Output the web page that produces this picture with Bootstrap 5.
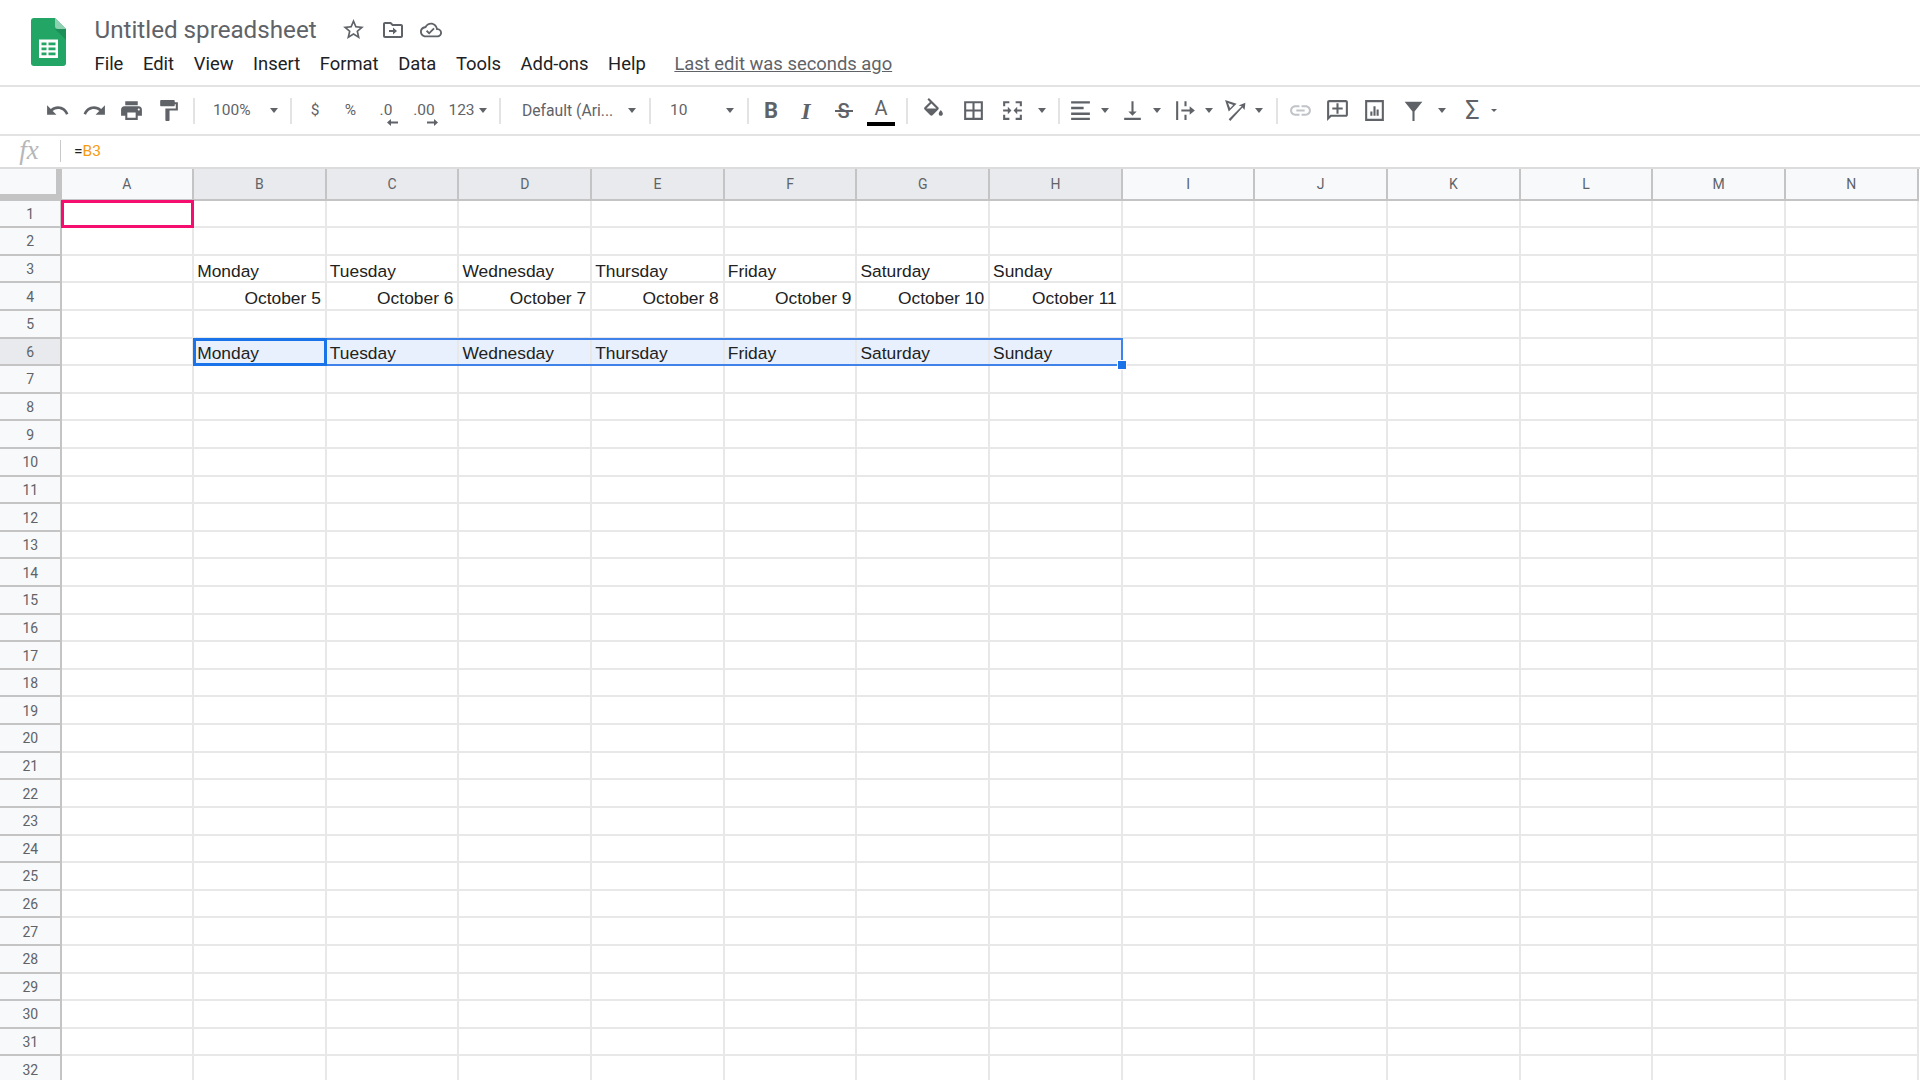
<!DOCTYPE html>
<html lang="en">
<head>
  <meta charset="UTF-8">
  <meta name="viewport" content="width=device-width, initial-scale=1.0">
  <title>Untitled spreadsheet</title>
  <link rel="stylesheet" href="https://cdn.jsdelivr.net/npm/bootstrap@5.3.0/dist/css/bootstrap.min.css" />
  <style>
    html, body { height: 100%; overflow: hidden; }
    body { background: #fff; font-family: Roboto, sans-serif; color: #202124; }

    /* top bar */
    .app-header { height: 85px; }
    .app-logo { width: 35px; height: 48px; margin: 18px 0 0 30.5px; flex: none; }
    .app-titles { margin-left: 29px; }
    .doc-title { height: 28px; margin-top: 15.5px; gap: 15px; }
    .doc-title h1 { font-size: 24.2px; font-weight: 400; color: #5f6368; margin: 0 9px 0 0; line-height: 28px; }
    .doc-title svg { width: 24px; height: 24px; fill: #5f6368; flex: none; }
    .doc-title svg.star { width: 25px; height: 25px; }
    .doc-title svg.cloud { width: 22px; height: 22px; }
    .menu-bar { height: 24px; margin-top: 8px; font-size: 18.4px; line-height: 24px; gap: 19.6px; }
    .menu-bar a { color: #202124; text-decoration: none; }
    .menu-bar a.last-edit { color: #5f6368; text-decoration: underline; margin-left: 9px; }

    /* toolbar */
    .tool-bar { height: 51px; padding-left: 39px; border-top: 2px solid #e3e3e3; border-bottom: 2px solid #e3e3e3; color: #5f6368; }
    .tool { flex: none; height: 30px; display: flex; align-items: center; justify-content: center; width: 37px; font-size: 15.5px; }
    .tool svg { width: 25px; height: 25px; fill: #5f6368; flex: none; }
    .tool.w34 { width: 34px; } .tool.w32 { width: 32px; }
    .tool.w38 { width: 38px; } .tool.w42 { width: 42px; } .tool.w47 { width: 47px; }
    .tool.w48 { width: 48px; } .tool.w52 { width: 52px; } .tool.w56 { width: 56px; }
    .tool.w57 { width: 57px; } .tool.w58 { width: 58px; } .tool.w63 { width: 63px; }
    .tool svg.muted { fill: #c0c3c7; }
    .tool.split { gap: 7.4px; padding-right: 2.4px; }
    .tool.split.tight { gap: 4px; padding-right: 3px; }
    .tool.split.merge { gap: 12.6px; padding-right: 0; }
    .tool.split.filter { gap: 12px; padding: 0 0 0 4px; }
    .tool.split.sum { gap: 11px; padding-right: 0; }
    .sel { justify-content: space-between; }
    .sel-zoom { width: 83px; padding: 0 6px 0 12px; }
    .sel-font { width: 136px; padding: 0 7px 0 15px; font-size: 15.7px; }
    .sel-size { width: 84px; padding: 0 7px 0 13px; }
    .caret { width: 0; height: 0; border-left: 4.75px solid transparent; border-right: 4.75px solid transparent; border-top: 5px solid #5f6368; flex: none; }
    .caret.small { border-left-width: 3.5px; border-right-width: 3.5px; border-top-width: 3.5px; }
    .sep { width: 2px; height: 26px; background: #e3e3e3; margin: 0 6px; flex: none; }
    .tool.fmt-b { width: 32px; font-weight: 700; font-size: 22px; }
    .tool.fmt-i { width: 38px; font-family: "Liberation Serif", serif; font-style: italic; font-weight: 700; font-size: 24px; }
    .tool.fmt-s { position: relative; font-weight: 500; font-size: 20px; }
    .fmt-s::after { content: ""; position: absolute; left: 9.5px; right: 9.5px; top: 14px; height: 2px; background: #5f6368; }
    .tool.fmt-a { flex-direction: column; height: 36px; font-size: 20px; line-height: 24px; padding-top: 1px; }
    .fmt-a i { display: block; width: 28px; height: 4px; background: #000; margin-top: 2px; }
    .dec { position: relative; }
    .tool.dec svg { position: absolute; width: 11px; height: 7px; top: 23px; }
    .tool.dec .left { left: 18px; }
    .tool.dec .right { left: 24px; }
    .sigma { font-size: 25px; line-height: 25px; }

    /* formula bar */
    .formula-bar { height: 32.5px; border-bottom: 2px solid #dcdcdc; }
    .fx { width: 60px; text-align: center; padding: 0 2px 3px 0; font-family: "Liberation Serif", serif; font-style: italic; font-size: 27px; color: #b5b7ba; line-height: 30px; }
    .formula-sep { width: 1px; height: 22px; background: #c9c9c9; }
    .formula-text { margin-left: 13px; font-size: 15.5px; color: #202124; }
    .formula-text span { color: #f69b0f; }

    /* sheet */
    .sheet { position: relative; display: grid; grid-template-columns: 61.5px repeat(14, 132.67px); grid-template-rows: 32px; grid-auto-rows: 27.61px; }
    .c { border-right: 2px solid #e8e8e8; border-bottom: 2px solid #e8e8e8; font-family: "Liberation Sans", Arial, sans-serif; font-size: 17.4px; line-height: 20px; padding: 0 4px .7px 3px; display: flex; align-items: flex-end; white-space: nowrap; color: #222; overflow: hidden; }
    .c.num { justify-content: flex-end; }
    .corner { background: #f8f9fa; border-right: 6px solid #c4c4c4; border-bottom: 7px solid #c4c4c4; }
    .hc, .hr { background: #f8f9fa; color: #5f6368; font-family: Roboto, sans-serif; font-size: 14px; display: flex; align-items: center; justify-content: center; border-right: 2px solid #c4c4c4; border-bottom: 2px solid #c4c4c4; }
    .hc { padding-top: 2px; }
    .hr { padding-top: 2px; padding-left: 1px; }
    .hc.on, .hr.on { background: #e8eaed; }
    .in-range { background: #e7f0fc; }
    .pink { position: absolute; inset: -1px 0 0 -1px; border: 3px solid #f50e6e; grid-column: 2 / 3; grid-row: 2 / 3; pointer-events: none; }
    .range { position: absolute; inset: -1px 0 0 -1px; border: 2px solid #3f83ea; grid-column: 3 / 10; grid-row: 7 / 8; pointer-events: none; }
    .active { position: absolute; inset: -1px 0 0 -1px; border: 3px solid #1a73e8; grid-column: 3 / 4; grid-row: 7 / 8; pointer-events: none; }
    .handle { position: absolute; right: -5px; bottom: -5px; width: 8px; height: 8px; background: #1a73e8; outline: 1px solid #fff; }
  </style>
</head>
<body>

  <!-- Title and menus -->
  <header class="app-header d-flex">
    <svg class="app-logo" viewBox="0 0 35 48">
      <path d="M3 0h21l11 11v34a3 3 0 0 1-3 3H3a3 3 0 0 1-3-3V3a3 3 0 0 1 3-3z" fill="#23a566"/>
      <path d="M24 11l11 11V11z" fill="#1c8f58"/>
      <path d="M24 0l11 11h-8a3 3 0 0 1-3-3z" fill="#8ed1b1"/>
      <path d="M8 21.5h19v18.500H8z" fill="#fff"/>
      <path d="M10.500 24.500h5v2.800h-5zM17.500 24.500h7v2.800h-7zM10.500 29.500h5v2.800h-5zM17.500 29.500h7v2.800h-7zM10.500 34.500h5v2.800h-5zM17.500 34.500h7v2.800h-7z" fill="#23a566"/>
    </svg>
    <div class="app-titles">
      <div class="doc-title d-flex align-items-center">
        <h1>Untitled spreadsheet</h1>
        <svg class="star" viewBox="0 0 24 24"><path d="M22 9.24l-7.19-.62L12 2 9.19 8.63 2 9.24l5.46 4.73L5.82 21 12 17.27 18.18 21l-1.63-7.03L22 9.24zM12 15.4l-3.76 2.27 1-4.28-3.32-2.88 4.38-.38L12 6.1l1.71 4.04 4.38.38-3.32 2.88 1 4.28L12 15.4z"/></svg>
        <svg viewBox="0 0 24 24"><path d="M20 6h-8l-2-2H4c-1.1 0-2 .9-2 2v12c0 1.1.9 2 2 2h16c1.1 0 2-.9 2-2V8c0-1.1-.9-2-2-2zm0 12H4V6h5.17l2 2H20v10z"/><path d="M12 9.5l4 3.5-4 3.5V14H8v-2h4z"/></svg>
        <svg class="cloud" viewBox="0 0 24 24"><path d="M19.35 10.04C18.67 6.59 15.64 4 12 4 9.11 4 6.6 5.64 5.35 8.04 2.34 8.36 0 10.91 0 14c0 3.31 2.69 6 6 6h13c2.76 0 5-2.24 5-5 0-2.64-2.05-4.78-4.65-4.96zM19 18H6c-2.21 0-4-1.79-4-4 0-2.05 1.53-3.76 3.56-3.97l1.07-.11.5-.95C8.08 7.14 9.94 6 12 6c2.62 0 4.88 1.86 5.39 4.43l.3 1.5 1.53.11c1.56.1 2.78 1.41 2.78 2.96 0 1.65-1.35 3-3 3zm-9-3.82l-2.09-2.09L6.5 13.5 10 17l6.01-6.01-1.41-1.41z"/></svg>
      </div>
      <nav class="menu-bar d-flex">
        <a href="#">File</a><a href="#">Edit</a><a href="#">View</a><a href="#">Insert</a><a href="#">Format</a><a href="#">Data</a><a href="#">Tools</a><a href="#">Add-ons</a><a href="#">Help</a>
        <a href="#" class="last-edit">Last edit was seconds ago</a>
      </nav>
    </div>
  </header>

  <!-- Toolbar -->
  <div class="tool-bar d-flex align-items-center">
    <div class="tool"><svg viewBox="0 0 24 24"><path d="M12.5 8c-2.65 0-5.05.99-6.9 2.6L2 7v9h9l-3.62-3.62c1.39-1.16 3.16-1.88 5.12-1.88 3.54 0 6.55 2.31 7.6 5.5l2.37-.78C21.08 11.03 17.15 8 12.5 8z"/></svg></div>
    <div class="tool"><svg viewBox="0 0 24 24"><path d="M18.4 10.6C16.55 8.99 14.15 8 11.5 8c-4.65 0-8.58 3.03-9.96 7.22L3.9 16c1.05-3.19 4.05-5.5 7.6-5.5 1.95 0 3.73.72 5.12 1.88L13 16h9V7l-3.6 3.6z"/></svg></div>
    <div class="tool"><svg viewBox="0 0 24 24"><path d="M19 8H5c-1.66 0-3 1.34-3 3v6h4v4h12v-4h4v-6c0-1.66-1.34-3-3-3zm-3 11H8v-5h8v5zm3-7c-.55 0-1-.45-1-1s.45-1 1-1 1 .45 1 1-.45 1-1 1zm-1-9H6v4h12V3z"/></svg></div>
    <div class="tool"><svg viewBox="0 0 24 24"><path d="M18 4V3c0-.55-.45-1-1-1H5c-.55 0-1 .45-1 1v4c0 .55.45 1 1 1h12c.55 0 1-.45 1-1V6h1v4H9v11c0 .55.45 1 1 1h2c.55 0 1-.45 1-1v-9h8V4h-3z"/></svg></div>
    <div class="sep"></div>
    <div class="tool sel sel-zoom"><span>100%</span><span class="caret"></span></div>
    <div class="sep"></div>
    <div class="tool w34">$</div>
    <div class="tool">%</div>
    <div class="tool w34 dec">.0<svg class="left" viewBox="0 0 11 7"><path d="M0 3.500L4 0v2.500h7v2H4V7z"/></svg></div>
    <div class="tool w42 dec">.00<svg class="right" viewBox="0 0 11 7"><path d="M11 3.500L7 0v2.500H0v2h7V7z"/></svg></div>
    <div class="tool w48 split tight"><span>123</span><span class="caret"></span></div>
    <div class="sep"></div>
    <div class="tool sel sel-font"><span>Default (Ari...</span><span class="caret"></span></div>
    <div class="sep"></div>
    <div class="tool sel sel-size"><span>10</span><span class="caret"></span></div>
    <div class="sep"></div>
    <div class="tool fmt-b">B</div>
    <div class="tool fmt-i">I</div>
    <div class="tool fmt-s">S</div>
    <div class="tool w38 fmt-a">A<i></i></div>
    <div class="sep"></div>
    <div class="tool w38"><svg viewBox="0 0 24 24"><path d="M16.56 8.94L7.62 0 6.21 1.41l2.38 2.38-5.15 5.15c-.59.59-.59 1.54 0 2.12l5.5 5.5c.29.29.68.44 1.06.44s.77-.15 1.06-.44l5.5-5.5c.59-.58.59-1.53 0-2.12zM5.21 10L10 5.21 14.79 10H5.21zM19 11.5s-2 2.17-2 3.5c0 1.1.9 2 2 2s2-.9 2-2c0-1.33-2-3.5-2-3.5z"/></svg></div>
    <div class="tool w42"><svg viewBox="0 0 24 24"><path d="M3 3v18h18V3H3zm8 16H5v-6h6v6zm0-8H5V5h6v6zm8 8h-6v-6h6v6zm0-8h-6V5h6v6z"/></svg></div>
    <div class="tool w58 split merge"><svg viewBox="0 0 24 24"><path d="M3 3h6v2H5v3H3zM21 3h-6v2h4v3h2zM3 21h6v-2H5v-3H3zM21 21h-6v-2h4v-3h2zM3 11h4.500V8.500L11 12l-3.500 3.500V13H3zM21 11h-4.500V8.500L13 12l3.500 3.500V13H21z"/></svg><span class="caret"></span></div>
    <div class="sep"></div>
    <div class="tool w47 split"><svg viewBox="0 0 24 24"><path d="M3 3h18v2.200H3zM3 8.500h12v2.200H3zM3 14h18v2.200H3zM3 19h18v2.200H3z"/></svg><span class="caret"></span></div>
    <div class="tool w57 split"><svg viewBox="0 0 24 24"><path d="M16 13h-3V3h-2v10H8l4 4 4-4zM4 19v2h16v-2H4z"/></svg><span class="caret"></span></div>
    <div class="tool w48 split"><svg viewBox="0 0 24 24"><path d="M3 3h2v18H3zM11 3h2v5h-2zM11 16h2v5h-2zM8 11h8V8l5 4-5 4v-3H8z"/></svg><span class="caret"></span></div>
    <div class="tool w52 split"><svg viewBox="0 0 24 24"><path d="M2 2l11 3.500-7.500 7.500zM4.800 4.800l2 5 3-3zM5.500 20.500L18 8l-3-.8L21.500 4.500l-.8 7-2-2.300L7 22z"/></svg><span class="caret"></span></div>
    <div class="sep"></div>
    <div class="tool w32"><svg class="muted" viewBox="0 0 24 24"><path d="M3.9 12c0-1.710 1.390-3.100 3.100-3.100h4V7H7c-2.760 0-5 2.240-5 5s2.240 5 5 5h4v-1.900H7c-1.710 0-3.100-1.390-3.100-3.100zM8 13h8v-2H8v2zm9-6h-4v1.900h4c1.710 0 3.100 1.390 3.100 3.100s-1.390 3.100-3.100 3.100h-4V17h4c2.760 0 5-2.240 5-5s-2.240-5-5-5z"/></svg></div>
    <div class="tool w42"><svg viewBox="0 0 24 24"><path d="M20 2H4c-1.100 0-2 .9-2 2v18l4-4h14c1.100 0 2-.9 2-2V4c0-1.100-.9-2-2-2zm0 14H5.170L4 17.170V4h16v12zM13 5h-2v4H7v2h4v4h2v-4h4V9h-4z"/></svg></div>
    <div class="tool w32"><svg viewBox="0 0 24 24"><path d="M21 2H3v20h18zm-2 18H5V4h14zM8 13h2v4H8zM11 8h2v9h-2zM14 11h2v6h-2z"/></svg></div>
    <div class="tool w63 split filter"><svg viewBox="0 0 24 24"><path d="M3.500 3.500h17l-7.500 9.500V22h-2v-9z"/></svg><span class="caret"></span></div>
    <div class="tool w56 split sum"><span class="sigma">Σ</span><span class="caret small"></span></div>
  </div>

  <!-- Formula bar -->
  <div class="formula-bar d-flex align-items-center">
    <div class="fx">fx</div>
    <div class="formula-sep"></div>
    <div class="formula-text">=<span>B3</span></div>
  </div>

  <!-- Sheet -->
  <div class="sheet" id="sheet"></div>

  <script>
    const COLUMNS = "ABCDEFGHIJKLMN".split("");
    const DAYS = ["Monday", "Tuesday", "Wednesday", "Thursday", "Friday", "Saturday", "Sunday"];
    const DATES = ["October 5", "October 6", "October 7", "October 8", "October 9", "October 10", "October 11"];
    const sheet = document.getElementById("sheet");

    function addCell(className, text) {
      const cell = document.createElement("div");
      cell.className = className;
      cell.textContent = text || "";
      sheet.appendChild(cell);
    }

    addCell("corner");
    COLUMNS.forEach((col, i) => addCell("hc" + (i >= 1 && i <= 7 ? " on" : ""), col));

    for (let row = 1; row <= 32; row++) {
      addCell("hr" + (row === 6 ? " on" : ""), row);
      COLUMNS.forEach((col, i) => {
        const day = i - 1;
        if (day < 0 || day > 6) addCell("c");
        else if (row === 3) addCell("c", DAYS[day]);
        else if (row === 4) addCell("c num", DATES[day]);
        else if (row === 6) addCell("c in-range", DAYS[day]);
        else addCell("c");
      });
    }

    sheet.insertAdjacentHTML("beforeend", '<div class="pink"></div><div class="range"><div class="handle"></div></div><div class="active"></div>');
  </script>

  <script src="https://cdn.jsdelivr.net/npm/bootstrap@5.3.0/dist/js/bootstrap.bundle.min.js"></script>
</body>
</html>
